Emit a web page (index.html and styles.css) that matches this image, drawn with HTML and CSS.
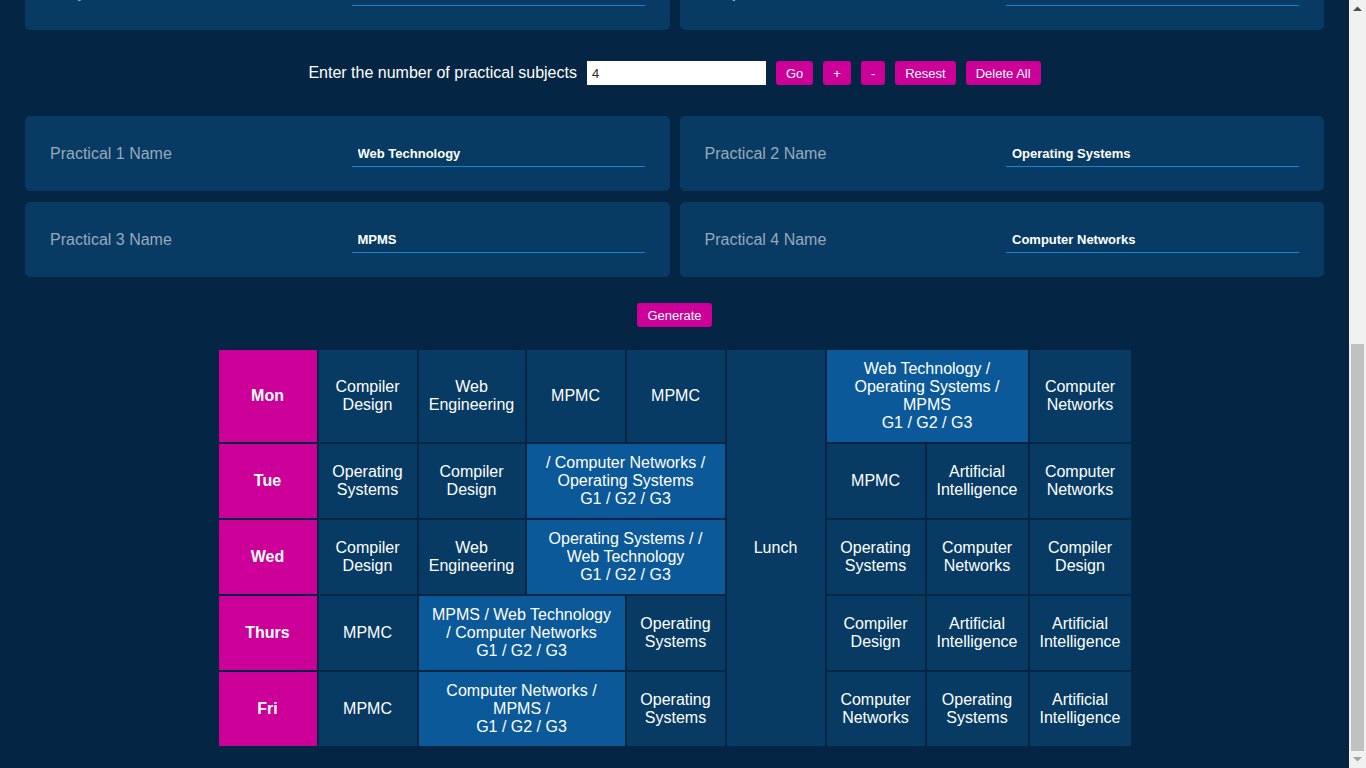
FILE: index.html
```html
<!DOCTYPE html>
<html lang="en">
<head>
<meta charset="utf-8">
<title>Time Table Generator</title>
<link rel="stylesheet" href="styles.css">
</head>
<body>
<div class="scroller">
  <main class="page">
    <h1 class="title">Time Table Generator</h1>
    <p class="subtitle">Fill in the subjects and practicals, then generate the weekly time table.</p>

    <div class="card-grid card-grid-first">
      <div class="card"><span class="card-label">Number of Days</span><input class="card-input" type="text" value="5"></div>
      <div class="card"><span class="card-label">Number of Periods</span><input class="card-input" type="text" value="8"></div>
    </div>

    <div class="count-row">
      <span>Enter the number of subjects</span>
      <input class="count-input" type="text" value="6">
      <button class="btn">Go</button>
      <button class="btn">+</button>
      <button class="btn">-</button>
      <button class="btn">Resest</button>
      <button class="btn">Delete All</button>
    </div>

    <div class="card-grid">
      <div class="card"><span class="card-label">Subject 1 Name</span><input class="card-input" type="text" value="Compiler Design"></div>
      <div class="card"><span class="card-label">Subject 2 Name</span><input class="card-input" type="text" value="Web Engineering"></div>
      <div class="card"><span class="card-label">Subject 3 Name</span><input class="card-input" type="text" value="MPMC"></div>
      <div class="card"><span class="card-label">Subject 4 Name</span><input class="card-input" type="text" value="Operating Systems"></div>
      <div class="card"><span class="card-label">Subject 5 Name</span><input class="card-input" type="text" value="Artificial Intelligence"></div>
      <div class="card"><span class="card-label">Subject 6 Name</span><input class="card-input" type="text" value="Computer Networks"></div>
    </div>

    <div class="count-row">
      <span>Enter the number of practical subjects</span>
      <input class="count-input" type="text" value="4">
      <button class="btn">Go</button>
      <button class="btn">+</button>
      <button class="btn">-</button>
      <button class="btn">Resest</button>
      <button class="btn">Delete All</button>
    </div>

    <div class="card-grid">
      <div class="card"><span class="card-label">Practical 1 Name</span><input class="card-input" type="text" value="Web Technology"></div>
      <div class="card"><span class="card-label">Practical 2 Name</span><input class="card-input" type="text" value="Operating Systems"></div>
      <div class="card"><span class="card-label">Practical 3 Name</span><input class="card-input" type="text" value="MPMS"></div>
      <div class="card"><span class="card-label">Practical 4 Name</span><input class="card-input" type="text" value="Computer Networks"></div>
    </div>

    <div class="generate-row"><button class="btn btn-generate">Generate</button></div>

    <div class="timetable">
      <div class="cell day">Mon</div>
      <div class="cell">Compiler Design</div>
      <div class="cell">Web Engineering</div>
      <div class="cell">MPMC</div>
      <div class="cell">MPMC</div>
      <div class="cell lunch">Lunch</div>
      <div class="cell lab span2">Web Technology /<br>Operating Systems /<br>MPMS<br>G1 / G2 / G3</div>
      <div class="cell">Computer Networks</div>

      <div class="cell day">Tue</div>
      <div class="cell">Operating Systems</div>
      <div class="cell">Compiler Design</div>
      <div class="cell lab span2">/ Computer Networks /<br>Operating Systems<br>G1 / G2 / G3</div>
      <div class="cell">MPMC</div>
      <div class="cell">Artificial Intelligence</div>
      <div class="cell">Computer Networks</div>

      <div class="cell day">Wed</div>
      <div class="cell">Compiler Design</div>
      <div class="cell">Web Engineering</div>
      <div class="cell lab span2">Operating Systems / /<br>Web Technology<br>G1 / G2 / G3</div>
      <div class="cell">Operating Systems</div>
      <div class="cell">Computer Networks</div>
      <div class="cell">Compiler Design</div>

      <div class="cell day">Thurs</div>
      <div class="cell">MPMC</div>
      <div class="cell lab span2">MPMS / Web Technology<br>/ Computer Networks<br>G1 / G2 / G3</div>
      <div class="cell">Operating Systems</div>
      <div class="cell">Compiler Design</div>
      <div class="cell">Artificial Intelligence</div>
      <div class="cell">Artificial Intelligence</div>

      <div class="cell day">Fri</div>
      <div class="cell">MPMC</div>
      <div class="cell lab span2">Computer Networks /<br>MPMS /<br>G1 / G2 / G3</div>
      <div class="cell">Operating Systems</div>
      <div class="cell">Computer Networks</div>
      <div class="cell">Operating Systems</div>
      <div class="cell">Artificial Intelligence</div>
    </div>
  </main>
</div>
<div class="vscroll" aria-hidden="true">
  <div class="vscroll-btn">
    <svg width="9" height="5" viewBox="0 0 9 5"><polygon points="0,5 4.5,0.5 9,5" fill="#505050"/></svg>
  </div>
  <div class="vscroll-track"></div>
  <div class="vscroll-thumb"></div>
  <div class="vscroll-btn">
    <svg width="9" height="5" viewBox="0 0 9 5"><polygon points="0,0 4.5,4.5 9,0" fill="#a3a3a3"/></svg>
  </div>
</div>
</body>
</html>
```

FILE: styles.css
```css
html, body {
  margin: 0;
  height: 100%;
  overflow: hidden;
  background: #042644;
  font-family: "Liberation Sans", Arial, sans-serif;
}

body {
  display: flex;
}

.scroller {
  flex: 1;
  min-width: 0;
  height: 100vh;
  overflow-y: scroll;
  display: flex;
  flex-direction: column-reverse;
  scrollbar-width: none;
}

.scroller::-webkit-scrollbar {
  display: none;
}

/* classic window scrollbar */
.vscroll {
  flex: 0 0 17px;
  height: 100vh;
  display: flex;
  flex-direction: column;
  background: #f1f1f1;
}

.vscroll-btn {
  height: 17px;
  display: flex;
  align-items: center;
  justify-content: center;
}

.vscroll-track {
  flex: 1;
}

.vscroll-thumb {
  height: 407px;
  margin: 0 2px;
  background: #c1c1c1;
}

.page {
  flex-shrink: 0;
  padding: 50px 25px 22px;
}

.title {
  margin: 0 0 10px;
  font-size: 32px;
  line-height: 44px;
  text-align: center;
  color: #ffffff;
}

.subtitle {
  margin: 0;
  font-size: 16px;
  line-height: 22px;
  text-align: center;
  color: #98a9b9;
}

.count-row {
  display: flex;
  justify-content: center;
  align-items: center;
  height: 24px;
  color: #ffffff;
  font-size: 16px;
}

.card-grid + .count-row {
  margin-top: 31px;
}

.count-input {
  margin-left: 10px;
  width: 179px;
  height: 24px;
  box-sizing: border-box;
  border: none;
  padding: 0 5px;
  background: #ffffff;
  color: #3a2a10;
  font: 13px "Liberation Sans", Arial, sans-serif;
  outline: none;
}

.btn {
  margin-left: 10px;
  height: 24px;
  padding: 0 10px;
  border: none;
  border-radius: 3px;
  background: #cc0099;
  color: #ffffff;
  font: 13px "Liberation Sans", Arial, sans-serif;
}

.card-grid {
  display: grid;
  grid-template-columns: 1fr 1fr;
  column-gap: 10px;
  row-gap: 11px;
  margin-top: 31px;
}

.card-grid-first {
  margin-top: 51px;
}

.card {
  height: 75px;
  box-sizing: border-box;
  padding: 0 25px;
  display: flex;
  align-items: center;
  background: #073b63;
  border-radius: 5px;
}

.card-label {
  flex: 1;
  color: #98a9b9;
  font-size: 16px;
}

.card-input {
  width: 293px;
  height: 27px;
  box-sizing: border-box;
  padding: 0 6px;
  border: none;
  border-bottom: 1px solid #1a84d4;
  background: transparent;
  color: #ffffff;
  font: bold 13px "Liberation Sans", Arial, sans-serif;
  outline: none;
}

.generate-row {
  display: flex;
  justify-content: center;
  margin-top: 26px;
}

.btn-generate {
  margin-left: 0;
}

.timetable {
  display: grid;
  grid-template-columns: 98px 98px 106px 98px 98px 98px 98px 101px 101px;
  grid-template-rows: 92px repeat(4, 74px);
  gap: 2px;
  width: max-content;
  margin: 23px auto 0;
}

.cell {
  display: flex;
  align-items: center;
  justify-content: center;
  padding: 0 8px;
  background: #073b63;
  color: #ffffff;
  font-size: 16px;
  line-height: 18px;
  text-align: center;
}

.day {
  background: #cc0099;
  font-weight: bold;
}

.lab {
  background: #0b5998;
}

.span2 {
  grid-column: span 2;
}

.lunch {
  grid-column: 6;
  grid-row: 1 / 6;
}
```
